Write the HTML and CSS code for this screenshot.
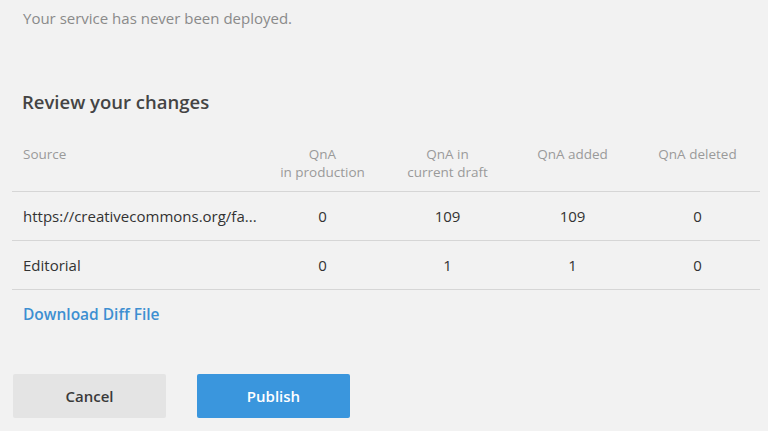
FILE: index.html
```html
<!DOCTYPE html>
<html>
<head>
<meta charset="utf-8">
<link rel="stylesheet" href="styles.css">
</head>
<body>
<div class="page">
  <p class="status">Your service has never been deployed.</p>
  <h2 class="title">Review your changes</h2>
  <table class="diff">
    <thead>
      <tr>
        <th class="src">Source</th>
        <th>QnA<br>in production</th>
        <th>QnA in<br>current draft</th>
        <th>QnA added</th>
        <th>QnA deleted</th>
      </tr>
    </thead>
    <tbody>
      <tr>
        <td class="src">https://creativecommons.org/fa...</td>
        <td>0</td>
        <td>109</td>
        <td>109</td>
        <td>0</td>
      </tr>
      <tr>
        <td class="src">Editorial</td>
        <td>0</td>
        <td>1</td>
        <td>1</td>
        <td>0</td>
      </tr>
    </tbody>
  </table>
  <a class="download" href="#">Download Diff File</a>
  <div class="actions">
    <button class="btn cancel">Cancel</button>
    <button class="btn publish">Publish</button>
  </div>
</div>
</body>
</html>
```

FILE: styles.css
```css
html, body {
  margin: 0;
  padding: 0;
  background: #f2f2f2;
  font-family: "Open Sans", "Noto Sans", sans-serif;
}
.page {
  padding: 0 8px 0 12px;
}
.status {
  margin: 0;
  padding: 7px 0 0 11px;
  font-size: 15px;
  line-height: 22px;
  color: #8a8a8a;
}
.title {
  margin: 0;
  padding: 59px 0 0 10px;
  font-size: 18.5px;
  line-height: 28px;
  font-weight: 600;
  color: #444;
}
.diff {
  margin-top: 29px;
  width: 748px;
  border-collapse: collapse;
  table-layout: fixed;
}
.diff th {
  font-weight: 400;
  font-size: 13.5px;
  line-height: 18px;
  color: #9a9a9a;
  text-align: center;
  vertical-align: top;
  padding: 0 0 10px;
  width: 125px;
  border-bottom: 1px solid #d6d6d6;
}
.diff th.src, .diff td.src {
  width: 237px;
  text-align: left;
  padding-left: 11px;
}
.diff td {
  height: 48px;
  padding: 0;
  font-size: 15px;
  color: #333;
  text-align: center;
  border-bottom: 1px solid #d6d6d6;
}
.download {
  display: inline-block;
  margin: 14px 0 0 11px;
  font-size: 15.5px;
  line-height: 20px;
  font-weight: 600;
  color: #3d8fd1;
  text-decoration: none;
}
.actions {
  display: flex;
  gap: 31px;
  margin-top: 49px;
  padding-left: 1px;
}
.btn {
  width: 153px;
  height: 44px;
  border: none;
  border-radius: 2px;
  font-family: inherit;
  font-size: 15px;
  font-weight: 600;
}
.cancel {
  background: #e4e4e4;
  color: #3a3a3a;
}
.publish {
  background: #3a96dd;
  color: #fff;
}
```
